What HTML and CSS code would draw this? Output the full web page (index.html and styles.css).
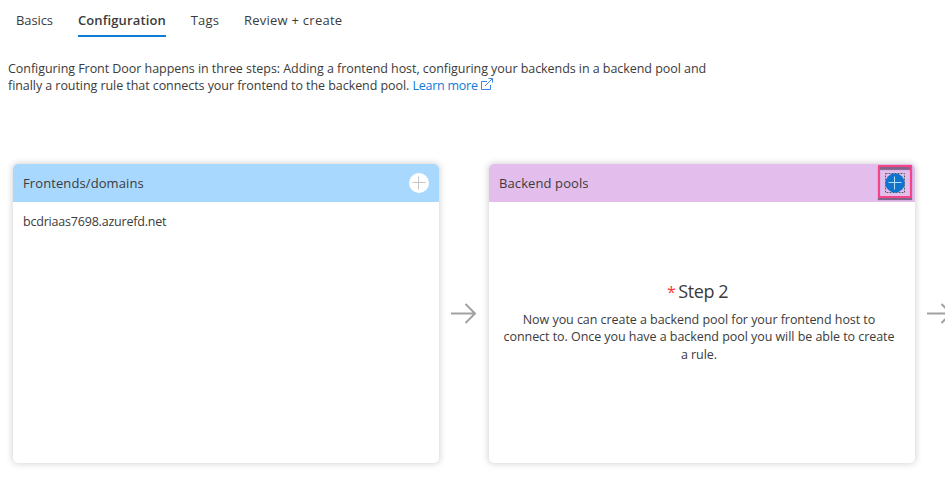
FILE: index.html
```html
<!DOCTYPE html>
<html lang="en">
<head>
<meta charset="utf-8">
<title>Create a Front Door</title>
<link rel="stylesheet" href="styles.css">
</head>
<body>
<nav class="tabs">
  <a class="tab tab-basics">Basics</a>
  <a class="tab tab-active">Configuration</a>
  <a class="tab tab-tags">Tags</a>
  <a class="tab tab-review">Review + create</a>
</nav>
<p class="intro">
  <span class="line line-one">Configuring Front Door happens in three steps: Adding a frontend host, configuring your backends in a backend pool and</span>
  <span class="line line-two">finally a routing rule that connects your frontend to the backend pool. <a class="link">Learn more</a><svg class="external" viewBox="0 0 13 13"><path d="M7 3.500H1.500v8h9V7M5 8l7-7M8.500 .5h4v4"/></svg></span>
</p>
<main class="designer">
  <section class="card">
    <header class="card-head frontends">
      <h2 class="title">Frontends/domains</h2>
      <button class="add" aria-label="Add frontend"><svg viewBox="0 0 20 20"><circle cx="10" cy="10" r="10" fill="#fff"/><path d="M3.500 9.500h13M9.500 3.500v13" stroke="#c4c4c4"/></svg></button>
    </header>
    <div class="host">bcdriaas7698.azurefd.net</div>
  </section>
  <svg class="arrow" viewBox="0 0 26 22"><path d="M0 10.500h24M14.500 1L24 10.500L14.500 20"/></svg>
  <section class="card">
    <header class="card-head backends">
      <h2 class="title">Backend pools</h2>
      <button class="add" aria-label="Add backend pool"><svg viewBox="0 0 20 20"><path d="M.5 .5h19v19H.5z" fill="none" stroke="#f6e6fa"/><path d="M.5 .5h19v19H.5z" fill="none" stroke="#5d5062" stroke-dasharray="2 1"/><circle cx="10" cy="10" r="9.700" fill="#0f74cc"/><path d="M3.500 9.500h13M9.500 3.500v13" stroke="#b9dcf5"/></svg><span class="highlight"></span></button>
    </header>
    <div class="step">
      <h3 class="step-title"><span class="required">*</span>Step 2</h3>
      <p class="step-text">
        <span class="line step-one">Now you can create a backend pool for your frontend host to</span>
        <span class="line step-two">connect to. Once you have a backend pool you will be able to create</span>
        <span class="line step-three">a rule.</span>
      </p>
    </div>
  </section>
  <svg class="arrow" viewBox="0 0 26 22"><path d="M0 10.500h24M14.500 1L24 10.500L14.500 20"/></svg>
</main>
</body>
</html>
```

FILE: styles.css
```css
* { box-sizing: border-box; }
body {
  margin: 0;
  height: 481px;
  overflow: hidden;
  background: #fff;
  color: #3b3b3b;
  font: 12.5px/17px "Open Sans", "Noto Sans", sans-serif;
}
h2, h3, p { margin: 0; font-weight: 400; }
.tabs { display: flex; gap: 25px; height: 37px; padding-left: 16px; font-size: 13px; }
.tab { padding-top: 12px; white-space: nowrap; }
.tab-basics { letter-spacing: -.1px; }
.tab-active { border-bottom: 2px solid #0f7bd8; font-weight: 600; letter-spacing: .12px; }
.tab-tags { letter-spacing: .12px; }
.tab-review { letter-spacing: .25px; }
.intro { margin: 23px 0 0 8px; letter-spacing: -.053px; }
.line { display: block; white-space: nowrap; }
.line-two { letter-spacing: -.065px; }
.link { color: #0f7bd8; letter-spacing: -.25px; }
.external { width: 13px; height: 13px; margin-left: 2px; vertical-align: -1px; fill: none; stroke: #3b86e8; }
.designer { display: flex; align-items: center; margin: 70px 0 0 13px; height: 299px; }
.card { flex: none; width: 426px; height: 299px; border-radius: 5px; overflow: hidden; box-shadow: 0 0 6px 1px rgba(0, 0, 0, .17); }
.card-head { display: flex; align-items: center; justify-content: space-between; height: 38px; padding: 0 10px; }
.frontends { background: #a9d8ff; }
.backends { background: #e3beed; }
.title { font-size: 13px; line-height: 18px; letter-spacing: .1px; }
.add { position: relative; flex: none; width: 20px; height: 20px; padding: 0; border: 0; background: none; }
.add svg { display: block; width: 20px; height: 20px; }
.highlight { position: absolute; left: -7px; top: -8px; width: 34px; height: 33px; border: 2px solid #f54387; box-shadow: 0 2px 1px #80648b, inset 0 3px 1px #80648b; }
.host { padding: 11px 10px; letter-spacing: -.2px; }
.arrow { flex: none; width: 26px; height: 22px; margin: 0 12px; fill: none; stroke: #a1a1a1; stroke-width: 2; }
.step { padding: 77px 6px 0 0; text-align: center; }
.step-title { height: 24px; padding-right: 3px; font-size: 18px; line-height: 24px; letter-spacing: -.45px; }
.required { margin-right: 3px; color: #f33; font-size: 16px; }
.step-text { width: 420px; margin-top: 8px; letter-spacing: -.05px; }
.step-three { margin-top: 1px; }
```
